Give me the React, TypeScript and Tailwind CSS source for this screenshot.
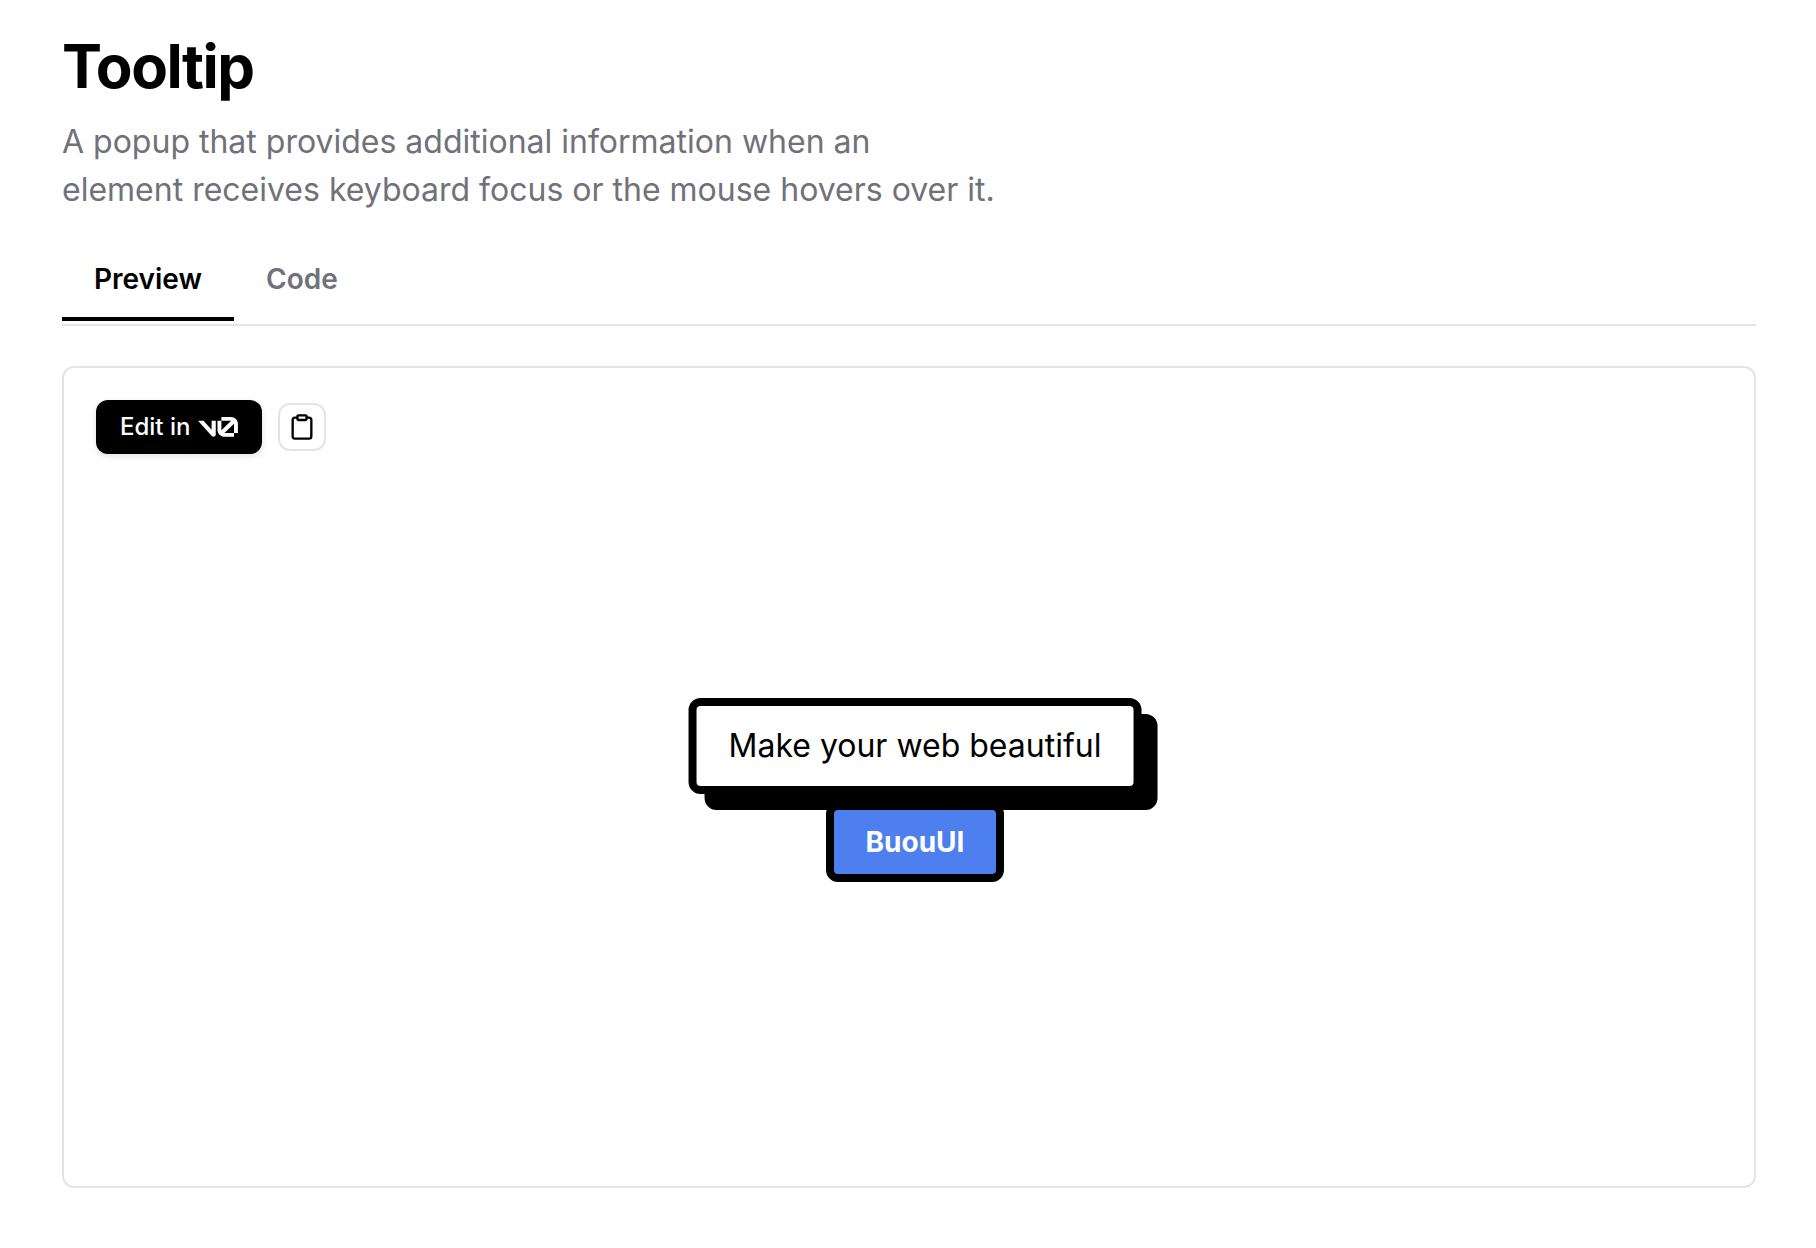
import React, { useState } from 'react';
import { Clipboard } from 'lucide-react';

type Tab = 'preview' | 'code';

const TABS: { id: Tab; label: string }[] = [
  { id: 'preview', label: 'Preview' },
  { id: 'code', label: 'Code' },
];

const SNIPPET = `<Tooltip content="Make your web beautiful">
  <Button>BuouUI</Button>
</Tooltip>`;

const V0Logo: React.FC = () => (
  <svg viewBox="0 0 40 20" className="w-10 h-5" fill="currentColor" aria-label="v0">
    <path d="M23.3919 0H32.9188C36.7819 0 39.9136 3.13165 39.9136 6.99475V16.0805H36.0006V6.99475C36.0006 6.90167 35.9969 6.80925 35.9898 6.71766L26.4628 16.079C26.4949 16.08 26.5272 16.0805 26.5595 16.0805H36.0006V19.7762H26.5595C22.6964 19.7762 19.4788 16.6139 19.4788 12.7508V3.68923H23.3919V12.7508C23.3919 12.9253 23.4054 13.0977 23.4316 13.2668L33.1682 3.6995C33.0861 3.6927 33.003 3.68923 32.9188 3.68923H23.3919V0Z" />
    <path d="M13.7688 19.0956L0 3.68759H5.53933L13.6231 12.7337V3.68759H17.7535V17.5746C17.7535 19.6705 15.1654 20.6584 13.7688 19.0956Z" />
  </svg>
);

const TooltipDemo: React.FC = () => (
  <div className="relative">
    <button
      aria-describedby="demo-tooltip"
      className="block h-20 px-8 rounded-xl border-8 border-black bg-[#4d80ee] text-[28px] leading-8 font-bold text-white"
    >
      BuouUI
    </button>
    <div
      id="demo-tooltip"
      role="tooltip"
      className="absolute bottom-full left-1/2 -translate-x-1/2 mb-2 px-8 py-4 rounded-xl border-8 border-black bg-white text-[32px] leading-12 text-black whitespace-nowrap shadow-[16px_16px_0_0_#000]"
    >
      Make your web beautiful
    </div>
  </div>
);

const App: React.FC = () => {
  const [tab, setTab] = useState<Tab>('preview');

  return (
    <main className="min-h-screen bg-white pl-[62px] pr-[60px] pt-[30px] pb-[60px] font-['Inter',sans-serif] text-black">
      <h1 className="text-[60px] leading-[72px] font-bold tracking-tight">Tooltip</h1>
      <p className="mt-4 text-[32px] leading-12 text-[#71717a]">
        A popup that provides additional information when an
        <br />
        element receives keyboard focus or the mouse hovers over it.
      </p>

      {/* Tabs */}
      <div role="tablist" className="mt-[27px] flex pb-[3px] border-b-2 border-[#e4e4e7]">
        {TABS.map(({ id, label }) => (
          <button
            key={id}
            role="tab"
            aria-selected={tab === id}
            onClick={() => setTab(id)}
            className={`px-8 py-[18px] border-b-4 text-[28px] leading-10 font-semibold ${
              tab === id ? 'border-black text-black' : 'border-transparent text-[#71717a]'
            }`}
          >
            {label}
          </button>
        ))}
      </div>

      {/* Panel */}
      <section className="mt-10 p-8 pb-0 rounded-xl border-2 border-[#e4e4e7]">
        {tab === 'preview' ? (
          <>
            <div className="flex items-center gap-4">
              <button className="flex items-center gap-2 h-[54px] px-6 rounded-xl bg-black text-2xl font-medium text-white shadow-[0_2px_6px_0_rgba(0,0,0,0.12)]">
                Edit in <V0Logo />
              </button>
              <button
                aria-label="Copy code"
                className="flex items-center justify-center size-12 rounded-xl border-2 border-[#e4e4e7]"
              >
                <Clipboard size={28} />
              </button>
            </div>
            <div className="flex items-center justify-center mt-11 pl-3 min-h-[688px]">
              <TooltipDemo />
            </div>
          </>
        ) : (
          <pre className="pb-8 text-2xl">{SNIPPET}</pre>
        )}
      </section>
    </main>
  );
};

export default App;
